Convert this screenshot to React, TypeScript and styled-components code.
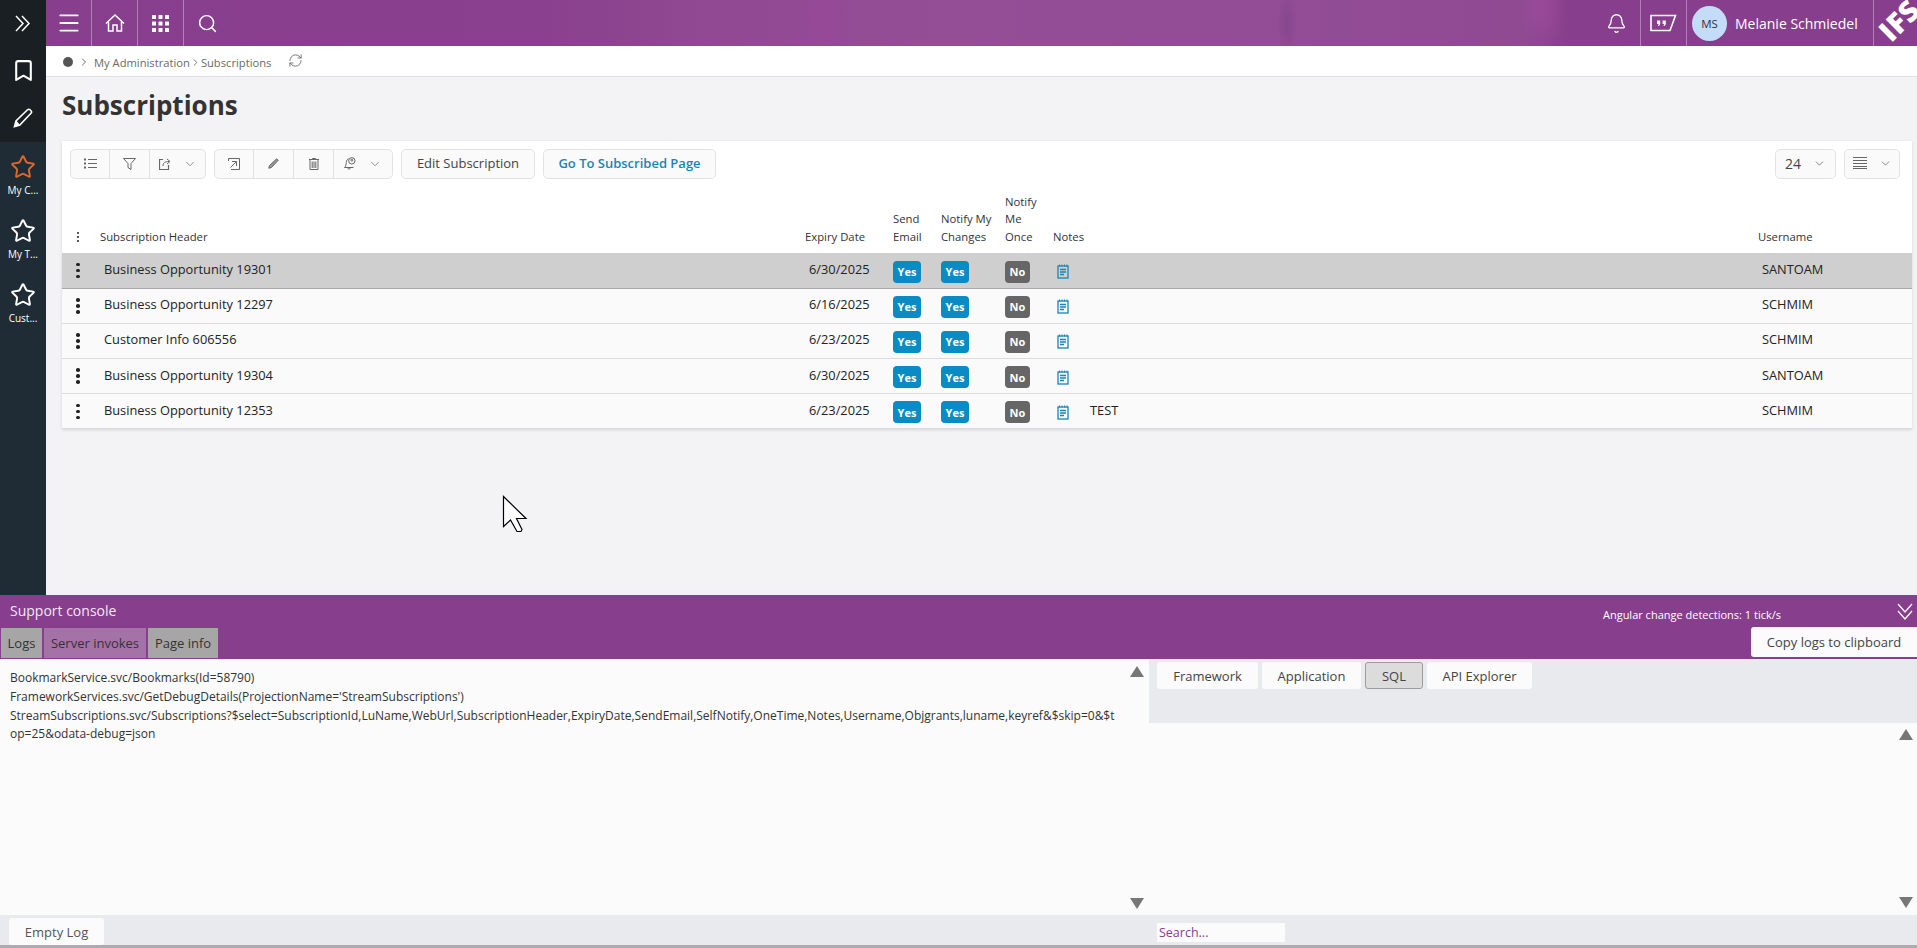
import React from "react";
import styled, { createGlobalStyle } from "styled-components";
import {
  Bell,
  Bookmark,
  ChevronDown,
  ChevronRight,
  Menu,
  RefreshCw,
  Search,
  Star,
} from "lucide-react";

const GlobalStyle = createGlobalStyle`
  html, body {
    margin: 0;
    height: 100%;
    overflow: hidden;
    font-family: "Open Sans", "Liberation Sans", sans-serif;
    background: #f3f2f5;
  }
  * { box-sizing: border-box; }
`;

const Shell = styled.div`
  position: relative;
  height: 100vh;
  display: flex;
  flex-direction: column;
`;

const Upper = styled.div`
  flex: 1;
  min-height: 0;
  display: flex;
`;

const Sidebar = styled.aside`
  width: 46px;
  flex: none;
  background: #1f2c36;
  display: flex;
  flex-direction: column;
`;

const SideTop = styled.div`
  height: 142px;
  background: #1a1f23;
  display: flex;
  flex-direction: column;
`;

const SideButton = styled.div<{ $h: number }>`
  height: ${(p) => p.$h}px;
  display: flex;
  align-items: center;
  justify-content: center;
  color: #fff;
`;

const Favourite = styled.div<{ $active?: boolean }>`
  height: 64px;
  padding-top: 12px;
  display: flex;
  flex-direction: column;
  align-items: center;
  gap: 3px;
  color: ${(p) => (p.$active ? "#d9692a" : "#fff")};
`;

const FavLabel = styled.span`
  font-size: 10px;
  line-height: 14px;
  color: #fff;
`;

const Main = styled.div`
  flex: 1;
  min-width: 0;
  display: flex;
  flex-direction: column;
`;

const TopBar = styled.header`
  height: 46px;
  flex: none;
  display: flex;
  color: #fff;
  background:
    radial-gradient(ellipse 28px 50px at 776px 20px, rgba(165, 65, 165, 0.28), transparent),
    radial-gradient(ellipse 10px 34px at 1241px 24px, rgba(90, 50, 100, 0.2), transparent),
    radial-gradient(ellipse 24px 40px at 1497px 8px, rgba(175, 80, 170, 0.4), transparent),
    linear-gradient(90deg, #873e8c 0, #8a408e 500px, #8f4891 640px, #944e96 900px, #914c96 1300px, #8f4a92 1480px, #873e8c 1525px);
`;

const BarCell = styled.div`
  width: 46px;
  flex: none;
  display: flex;
  align-items: center;
  justify-content: center;
  border-right: 1px solid rgba(255, 255, 255, 0.35);
`;

const BarSearch = styled.div`
  width: 46px;
  display: flex;
  align-items: center;
  justify-content: center;
`;

const BarGap = styled.div`
  flex: 1;
`;

const BellCell = styled.div`
  width: 48px;
  display: flex;
  align-items: center;
  justify-content: center;
  border-right: 1px solid rgba(255, 255, 255, 0.35);
`;

const UserCell = styled.div`
  width: 187px;
  padding-left: 5px;
  display: flex;
  align-items: center;
  gap: 8px;
  border-right: 1px solid rgba(255, 255, 255, 0.35);
`;

const Avatar = styled.div`
  width: 35px;
  height: 35px;
  border-radius: 50%;
  background: #c5dcf8;
  color: #333;
  font-size: 11.5px;
  display: flex;
  align-items: center;
  justify-content: center;
`;

const UserName = styled.span`
  font-size: 14px;
  white-space: nowrap;
`;

const LogoCell = styled.div`
  width: 43px;
  position: relative;
  overflow: hidden;
`;

const LogoText = styled.span`
  position: absolute;
  left: 3px;
  top: 5px;
  font-size: 29px;
  line-height: 30px;
  font-weight: 800;
  letter-spacing: 0.5px;
  transform: rotate(-45deg);
  transform-origin: 50% 50%;
`;

const Breadcrumb = styled.nav`
  height: 31px;
  flex: none;
  background: #fff;
  border-bottom: 1px solid #dedede;
  padding: 2px 0 0 17px;
  display: flex;
  align-items: center;
  font-size: 11.2px;
  color: #6a6a6a;
`;

const Dot = styled.span`
  width: 10px;
  height: 10px;
  margin-top: -1px;
  border-radius: 50%;
  background: #555;
  margin-right: 5px;
`;

const CrumbText = styled.span`
  margin-left: 4px;
  display: flex;
  align-items: center;
  white-space: nowrap;
`;

const CrumbRefresh = styled.span`
  margin-left: 17px;
  margin-top: -4px;
  display: flex;
  color: #666;
`;

const Page = styled.div`
  flex: 1;
  padding: 0 5px 0 16px;
  background: #f3f2f5;
`;

const Title = styled.h1`
  margin: 0;
  height: 64px;
  padding-top: 10px;
  font-size: 26px;
  line-height: 36px;
  font-weight: 700;
  color: #333;
`;

const Card = styled.section`
  background: #fff;
  box-shadow: 0 1px 3px rgba(0, 0, 0, 0.12);
`;

const Toolbar = styled.div`
  height: 46px;
  padding: 8px 12px 8px 8px;
  display: flex;
  gap: 8px;
`;

const ToolGroup = styled.div`
  display: flex;
  height: 30px;
  background: #fafafa;
  border: 1px solid #e2e2e2;
  border-radius: 5px;
`;

const ToolCell = styled.div<{ $w: number }>`
  width: ${(p) => p.$w}px;
  padding-bottom: 1px;
  display: flex;
  align-items: center;
  justify-content: center;
  gap: 12px;
  color: #666;
  & + & {
    border-left: 1px solid #e2e2e2;
  }
`;

const TextButton = styled.div<{ $w: number; $link?: boolean }>`
  width: ${(p) => p.$w}px;
  height: 30px;
  padding-bottom: 2px;
  background: #fafafa;
  border: 1px solid #e2e2e2;
  border-radius: 5px;
  display: flex;
  align-items: center;
  justify-content: center;
  font-size: 13px;
  font-weight: ${(p) => (p.$link ? 600 : 400)};
  color: ${(p) => (p.$link ? "#1a84b5" : "#444")};
  white-space: nowrap;
`;

const ToolSpacer = styled.div`
  flex: 1;
`;

const SelectButton = styled(TextButton)`
  gap: 12px;
  color: #444;
  font-size: 14px;
`;

const columns = "38px 705px 88px 48px 64px 48px 37px 668px 1fr";

const HeadRow = styled.div`
  height: 66.5px;
  display: grid;
  grid-template-columns: ${columns};
  align-items: end;
  padding-bottom: 7.5px;
  border-bottom: 1px solid #cfcfcf;
  font-size: 11.3px;
  line-height: 17.5px;
  color: #333;
`;

const HeadKebab = styled.div`
  display: flex;
  justify-content: center;
  padding-right: 6px;
  padding-bottom: 3px;
`;

const Row = styled.div<{ $selected?: boolean }>`
  height: 35.2px;
  display: grid;
  grid-template-columns: ${columns};
  align-items: center;
  background: ${(p) => (p.$selected ? "#cfcfcf" : "#fafafa")};
  border-bottom: 1px solid ${(p) => (p.$selected ? "#a9a9a9" : "#dcdcdc")};
  font-size: 12.8px;
  color: #222;
`;

const RowKebab = styled.div`
  display: flex;
  justify-content: center;
  padding-right: 6px;
`;

const Cell = styled.div`
  padding-left: 4px;
  margin-top: -3px;
  white-space: nowrap;
`;

const NoteText = styled(Cell)`
  padding-left: 0;
`;

const BadgeCell = styled.div`
  display: flex;
  margin-top: 2px;
`;

const Badge = styled.span<{ $on: boolean }>`
  width: ${(p) => (p.$on ? 28 : 25)}px;
  height: 22px;
  border-radius: 4px;
  background: ${(p) => (p.$on ? "#0a8bc4" : "#666")};
  color: #fff;
  font-size: 11px;
  font-weight: 700;
  display: flex;
  align-items: center;
  justify-content: center;
`;

const NoteCell = styled.div`
  padding-left: 4px;
  margin-top: 2px;
  display: flex;
  color: #1a84b5;
`;

const Dots = styled.span<{ $size: number; $gap: number }>`
  display: flex;
  flex-direction: column;
  gap: ${(p) => p.$gap}px;
  & > i {
    width: ${(p) => p.$size}px;
    height: ${(p) => p.$size}px;
    border-radius: 50%;
    background: #222;
  }
`;

const Console = styled.section`
  height: 353px;
  flex: none;
  display: flex;
  flex-direction: column;
  border-bottom: 3px solid #b0a9b0;
`;

const ConsoleHead = styled.div`
  height: 64px;
  flex: none;
  background: #873e8c;
  display: flex;
  flex-direction: column;
`;

const ConsoleTitleRow = styled.div`
  height: 32px;
  padding: 6px 3px 0 10px;
  display: flex;
  align-items: flex-start;
  color: #fff;
`;

const ConsoleTitle = styled.span`
  font-size: 14px;
  line-height: 20px;
  color: #f3e8f4;
`;

const TickText = styled.span`
  margin-left: auto;
  margin-right: 115px;
  margin-top: 5px;
  font-size: 11px;
  line-height: 18px;
`;

const Collapse = styled.span`
  display: flex;
  margin-top: 2px;
`;

const TabRow = styled.div`
  height: 32px;
  padding-left: 1px;
  display: flex;
  gap: 2px;
`;

const Tab = styled.div<{ $w: number; $active?: boolean }>`
  width: ${(p) => p.$w}px;
  height: 30px;
  margin-top: 1px;
  display: flex;
  align-items: center;
  justify-content: center;
  font-size: 13px;
  color: #333;
  background: ${(p) => (p.$active ? "#a572a8" : "#a6a6a6")};
`;

const CopyButton = styled.div`
  margin-left: auto;
  width: 166px;
  height: 30px;
  background: #fbfbfb;
  border-radius: 3px 0 0 3px;
  display: flex;
  align-items: center;
  justify-content: center;
  font-size: 13px;
  color: #444;
`;

const ConsoleBody = styled.div`
  flex: 1;
  min-height: 0;
  display: flex;
`;

const LogPane = styled.div`
  width: 1149px;
  flex: none;
  display: flex;
  background: #fbfbfb;
`;

const LogText = styled.div`
  width: 1125px;
  padding: 10px 9px 0 10px;
  font-size: 12px;
  line-height: 18.8px;
  color: #333;
  word-break: break-all;
`;

const ScrollTrack = styled.div`
  flex: 1;
  padding: 7px 0 6px;
  display: flex;
  flex-direction: column;
  justify-content: space-between;
  align-items: center;
`;

const Arrow = styled.span<{ $down?: boolean }>`
  width: 0;
  height: 0;
  border-left: 7px solid transparent;
  border-right: 7px solid transparent;
  ${(p) =>
    p.$down
      ? "border-top: 11px solid #777;"
      : "border-bottom: 11px solid #777;"}
`;

const DetailPane = styled.div`
  flex: 1;
  display: flex;
  flex-direction: column;
`;

const DetailTabs = styled.div`
  height: 64px;
  flex: none;
  padding: 3px 0 0 8px;
  background: #e9eaed;
  display: flex;
  align-items: flex-start;
  gap: 4px;
`;

const DetailTab = styled.div<{ $w: number; $active?: boolean }>`
  width: ${(p) => p.$w}px;
  height: 27px;
  border-radius: 3px;
  background: ${(p) => (p.$active ? "#dcdcdc" : "#fbfbfb")};
  border: ${(p) => (p.$active ? "1px solid #9c9c9c" : "0")};
  display: flex;
  align-items: center;
  justify-content: center;
  font-size: 13px;
  color: #444;
`;

const DetailView = styled.div`
  flex: 1;
  background: #fbfbfb;
  display: flex;
  justify-content: flex-end;
`;

const DetailTrack = styled(ScrollTrack)`
  flex: none;
  width: 22px;
  padding: 6px 0 7px;
`;

const ConsoleFoot = styled.div`
  height: 30px;
  flex: none;
  background: #e9eaed;
  display: flex;
  align-items: flex-end;
`;

const EmptyButton = styled.div`
  width: 95px;
  height: 27px;
  margin-left: 9px;
  background: #fbfbfb;
  border-radius: 3px;
  display: flex;
  align-items: center;
  justify-content: center;
  font-size: 13px;
  color: #555;
`;

const SearchBox = styled.div`
  width: 128px;
  height: 19px;
  margin-left: 1053px;
  margin-bottom: 3px;
  padding-left: 2px;
  background: #fbfbfb;
  font-size: 12.5px;
  line-height: 19px;
  color: #873e8c;
`;

const Pointer = styled.svg`
  position: absolute;
  left: 502px;
  top: 495px;
`;

const ChevronsIcon = () => (
  <svg width="16" height="17" viewBox="0 0 16 17" fill="none" stroke="#fff" strokeWidth="1.5">
    <path d="M1 1l7 7.500-7 7.500M7 1l7 7.500-7 7.500" />
  </svg>
);

const PencilIcon = () => (
  <svg width="20" height="20" viewBox="0 0 20 20" fill="none" stroke="#fff" strokeWidth="1.6">
    <path d="M1.500 18.500l1.500-5.500L14.500 1.800c.8-.7 1.800-.7 2.500 0l1 1c.7.8.7 1.800 0 2.500L6.800 17z" />
    <path d="M2.500 18l3.500-1-2.500-3z" fill="#fff" />
  </svg>
);

const HomeIcon = () => (
  <svg width="20" height="18" viewBox="0 0 20 18" fill="none" stroke="#fff" strokeWidth="1.500">
    <path d="M1 9.500L10 1l9 8.500" />
    <path d="M3.500 8v9h4.500v-6h4v6h4.500V8" />
  </svg>
);

const GridIcon = () => (
  <svg width="17" height="17" viewBox="0 0 17 17" fill="#fff">
    {[0, 6.5, 13].map((y) =>
      [0, 6.5, 13].map((x) => <rect key={`${x}-${y}`} x={x} y={y} width="4" height="4" rx="0.5" />)
    )}
  </svg>
);

const FlagIcon = () => (
  <svg width="27" height="18" viewBox="0 0 27 18" fill="none">
    <path d="M1 1.500h24.500L20 16.500H1z" stroke="#fff" strokeWidth="1.600" />
    <path d="M7 6.500h3.200v3c0 1.400-.8 2.200-2 2.600l-.4-1c.6-.2.9-.6.9-1.200H7zM12.600 6.500h3.200v3c0 1.400-.8 2.200-2 2.600l-.4-1c.6-.2.9-.6.9-1.200h-1.700z" fill="#fff" />
  </svg>
);

const ListIcon = () => (
  <svg width="13" height="11" viewBox="0 0 13 11" fill="none" stroke="#666" strokeWidth="1">
    <path d="M4 1.500h9M4 5.500h9M4 9.500h9" />
    <path d="M0 1.500h2M0 5.500h2M0 9.500h2" strokeWidth="2" />
  </svg>
);

const FunnelIcon = () => (
  <svg width="13" height="12" viewBox="0 0 13 12" fill="none" stroke="#666" strokeWidth="1">
    <path d="M0.500 0.500h12L8 5.500V11.500L5 9.500v-4z" />
  </svg>
);

const ShareIcon = () => (
  <svg width="12" height="12" viewBox="0 0 12 12" fill="none" stroke="#666" strokeWidth="1">
    <path d="M4 1.500H0.500v10h9V7" strokeWidth="1.200" />
    <path d="M4 8c0-3 1.500-4.500 6-4.500M8 1l3 2.500L8 6" />
  </svg>
);

const OpenIcon = () => (
  <svg width="12" height="12" viewBox="0 0 12 12" fill="none" stroke="#666" strokeWidth="1">
    <path d="M0.500 3V0.500h11v11H3" />
    <path d="M2.500 9.500L8 4M4 3.500h4.500V8" />
  </svg>
);

const EditIcon = () => (
  <svg width="11" height="11" viewBox="0 0 11 11" fill="none" stroke="#666" strokeWidth="1">
    <path d="M0.800 10.200l.7-2.700L8.700 0.800l1.500 1.500L3.500 9.500z" fill="#999" />
  </svg>
);

const BinIcon = () => (
  <svg width="10" height="12" viewBox="0 0 10 12" fill="none" stroke="#666" strokeWidth="1">
    <path d="M1 2v9.500h8V2M0 1.500h10M3.500 1.500V0.500h3v1" />
    <path d="M3.200 3.500v6.500M5 3.500v6.500M6.800 3.500v6.500" />
  </svg>
);

const BellUserIcon = () => (
  <svg width="12" height="13" viewBox="0 0 12 13" fill="none" stroke="#666" strokeWidth="1">
    <path d="M0.500 10.500c1.500-1.500 1.600-3 1.800-5C2.500 3.500 3 2.500 4.500 1.800M0.500 10.500h9M3.500 10.500c0 2 3 2 3 0" />
    <circle cx="7.800" cy="3.800" r="3.200" />
    <circle cx="7.800" cy="3.200" r="1" />
  </svg>
);

const LinesIcon = () => (
  <svg width="14" height="12" viewBox="0 0 14 12" stroke="#666" strokeWidth="1">
    <path d="M0 0.500h14M0 3.500h14M0 6.500h14M0 9.500h14M0 11.500h14" />
  </svg>
);

const NoteIcon = () => (
  <svg width="12" height="15" viewBox="0 0 12 15" fill="none" stroke="currentColor" strokeWidth="1.300">
    <rect x="1" y="2" width="10" height="12" />
    <path d="M3 5.500h6M3 8h6M3 10.500h4" />
    <path d="M2.500 0.500v2M5 0.500v2M7.500 0.500v2M10 0.500v2" strokeWidth="1" />
  </svg>
);

const CollapseIcon = () => (
  <svg width="18" height="18" viewBox="0 0 18 18" fill="none" stroke="#fff" strokeWidth="1.300">
    <path d="M2 1l7 8 7-8M2 8l7 8 7-8" />
  </svg>
);

const Kebab = ({ size, gap }: { size: number; gap: number }) => (
  <Dots $size={size} $gap={gap}>
    <i />
    <i />
    <i />
  </Dots>
);

const rows = [
  { name: "Business Opportunity 19301", date: "6/30/2025", user: "SANTOAM", note: "" },
  { name: "Business Opportunity 12297", date: "6/16/2025", user: "SCHMIM", note: "" },
  { name: "Customer Info 606556", date: "6/23/2025", user: "SCHMIM", note: "" },
  { name: "Business Opportunity 19304", date: "6/30/2025", user: "SANTOAM", note: "" },
  { name: "Business Opportunity 12353", date: "6/23/2025", user: "SCHMIM", note: "TEST" },
];

export default function App() {
  return (
    <Shell>
      <GlobalStyle />
      <Upper>
        <Sidebar>
          <SideTop>
            <SideButton $h={46}>
              <ChevronsIcon />
            </SideButton>
            <SideButton $h={48}>
              <Bookmark size={25} strokeWidth={2} />
            </SideButton>
            <SideButton $h={48}>
              <PencilIcon />
            </SideButton>
          </SideTop>
          <Favourite $active>
            <Star size={26} strokeWidth={1.8} />
            <FavLabel>My C...</FavLabel>
          </Favourite>
          <Favourite>
            <Star size={26} strokeWidth={1.8} />
            <FavLabel>My T...</FavLabel>
          </Favourite>
          <Favourite>
            <Star size={26} strokeWidth={1.8} />
            <FavLabel>Cust...</FavLabel>
          </Favourite>
        </Sidebar>
        <Main>
          <TopBar>
            <BarCell>
              <Menu size={26} strokeWidth={1.7} />
            </BarCell>
            <BarCell>
              <HomeIcon />
            </BarCell>
            <BarCell>
              <GridIcon />
            </BarCell>
            <BarSearch>
              <Search size={21} strokeWidth={1.7} />
            </BarSearch>
            <BarGap />
            <BellCell>
              <Bell size={21} strokeWidth={1.5} />
            </BellCell>
            <BarCell>
              <FlagIcon />
            </BarCell>
            <UserCell>
              <Avatar>MS</Avatar>
              <UserName>Melanie Schmiedel</UserName>
            </UserCell>
            <LogoCell>
              <LogoText>IFS</LogoText>
            </LogoCell>
          </TopBar>
          <Breadcrumb>
            <Dot />
            <ChevronRight size={12} />
            <CrumbText>
              My Administration
              <ChevronRight size={11} />
              Subscriptions
            </CrumbText>
            <CrumbRefresh>
              <RefreshCw size={15} strokeWidth={1.4} />
            </CrumbRefresh>
          </Breadcrumb>
          <Page>
            <Title>Subscriptions</Title>
            <Card>
              <Toolbar>
                <ToolGroup>
                  <ToolCell $w={38}>
                    <ListIcon />
                  </ToolCell>
                  <ToolCell $w={40}>
                    <FunnelIcon />
                  </ToolCell>
                  <ToolCell $w={56}>
                    <ShareIcon />
                    <ChevronDown size={14} strokeWidth={1.2} />
                  </ToolCell>
                </ToolGroup>
                <ToolGroup>
                  <ToolCell $w={38}>
                    <OpenIcon />
                  </ToolCell>
                  <ToolCell $w={40}>
                    <EditIcon />
                  </ToolCell>
                  <ToolCell $w={40}>
                    <BinIcon />
                  </ToolCell>
                  <ToolCell $w={59}>
                    <BellUserIcon />
                    <ChevronDown size={14} strokeWidth={1.2} />
                  </ToolCell>
                </ToolGroup>
                <TextButton $w={134}>Edit Subscription</TextButton>
                <TextButton $w={173} $link>
                  Go To Subscribed Page
                </TextButton>
                <ToolSpacer />
                <SelectButton $w={61}>
                  24
                  <ChevronDown size={13} strokeWidth={1.2} />
                </SelectButton>
                <SelectButton $w={56}>
                  <LinesIcon />
                  <ChevronDown size={13} strokeWidth={1.2} />
                </SelectButton>
              </Toolbar>
              <HeadRow>
                <HeadKebab>
                  <Kebab size={2.5} gap={1.5} />
                </HeadKebab>
                <div>Subscription Header</div>
                <div>Expiry Date</div>
                <div>
                  Send
                  <br />
                  Email
                </div>
                <div>
                  Notify My
                  <br />
                  Changes
                </div>
                <div>
                  Notify
                  <br />
                  Me
                  <br />
                  Once
                </div>
                <div>Notes</div>
                <div />
                <div>Username</div>
              </HeadRow>
              {rows.map((r, i) => (
                <Row key={r.name} $selected={i === 0}>
                  <RowKebab>
                    <Kebab size={3.5} gap={2.5} />
                  </RowKebab>
                  <Cell>{r.name}</Cell>
                  <Cell>{r.date}</Cell>
                  <BadgeCell>
                    <Badge $on>Yes</Badge>
                  </BadgeCell>
                  <BadgeCell>
                    <Badge $on>Yes</Badge>
                  </BadgeCell>
                  <BadgeCell>
                    <Badge $on={false}>No</Badge>
                  </BadgeCell>
                  <NoteCell>
                    <NoteIcon />
                  </NoteCell>
                  <NoteText>{r.note}</NoteText>
                  <Cell>{r.user}</Cell>
                </Row>
              ))}
            </Card>
          </Page>
        </Main>
      </Upper>
      <Console>
        <ConsoleHead>
          <ConsoleTitleRow>
            <ConsoleTitle>Support console</ConsoleTitle>
            <TickText>Angular change detections: 1 tick/s</TickText>
            <Collapse>
              <CollapseIcon />
            </Collapse>
          </ConsoleTitleRow>
          <TabRow>
            <Tab $w={41}>Logs</Tab>
            <Tab $w={102} $active>
              Server invokes
            </Tab>
            <Tab $w={70}>Page info</Tab>
            <CopyButton>Copy logs to clipboard</CopyButton>
          </TabRow>
        </ConsoleHead>
        <ConsoleBody>
          <LogPane>
            <LogText>
              BookmarkService.svc/Bookmarks(Id=58790)
              <br />
              FrameworkServices.svc/GetDebugDetails(ProjectionName='StreamSubscriptions')
              <br />
              StreamSubscriptions.svc/Subscriptions?$select=SubscriptionId,LuName,WebUrl,SubscriptionHeader,ExpiryDate,SendEmail,SelfNotify,OneTime,Notes,Username,Objgrants,luname,keyref&amp;$skip=0&amp;$top=25&amp;odata-debug=json
            </LogText>
            <ScrollTrack>
              <Arrow />
              <Arrow $down />
            </ScrollTrack>
          </LogPane>
          <DetailPane>
            <DetailTabs>
              <DetailTab $w={101}>Framework</DetailTab>
              <DetailTab $w={99}>Application</DetailTab>
              <DetailTab $w={58} $active>
                SQL
              </DetailTab>
              <DetailTab $w={105}>API Explorer</DetailTab>
            </DetailTabs>
            <DetailView>
              <DetailTrack>
                <Arrow />
                <Arrow $down />
              </DetailTrack>
            </DetailView>
          </DetailPane>
        </ConsoleBody>
        <ConsoleFoot>
          <EmptyButton>Empty Log</EmptyButton>
          <SearchBox>Search...</SearchBox>
        </ConsoleFoot>
      </Console>
      <Pointer width="26" height="38" viewBox="0 0 26 38">
        <path d="M1.500 1.500v30l7-6.500 6.500 11.500h4l1-2-5.500-11h9.500z" fill="#fff" stroke="#000" strokeWidth="1.200" />
      </Pointer>
    </Shell>
  );
}
